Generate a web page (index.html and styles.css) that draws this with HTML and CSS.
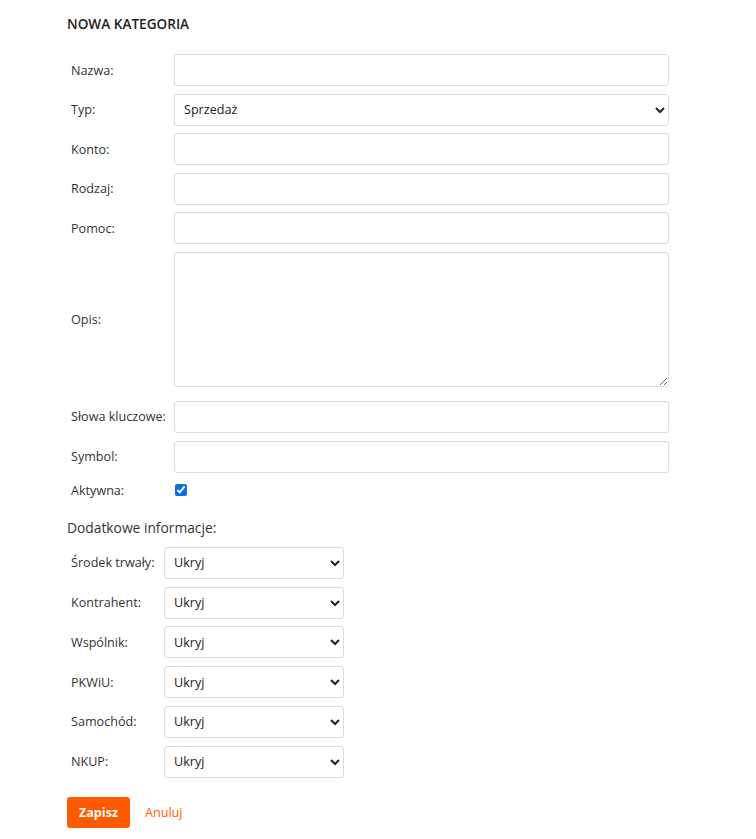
FILE: index.html
```html
<!DOCTYPE html>
<html lang="pl">
<head>
<meta charset="utf-8">
<title>Nowa kategoria</title>
<link rel="stylesheet" href="styles.css">
</head>
<body>
<div class="page">
  <h1 class="title">NOWA KATEGORIA</h1>
  <form class="form">
    <div class="row"><label class="lbl">Nazwa:</label><input class="field" type="text"></div>
    <div class="row"><label class="lbl">Typ:</label><select class="field"><option>Sprzedaż</option></select></div>
    <div class="row"><label class="lbl">Konto:</label><input class="field" type="text"></div>
    <div class="row"><label class="lbl">Rodzaj:</label><input class="field" type="text"></div>
    <div class="row"><label class="lbl">Pomoc:</label><input class="field" type="text"></div>
    <div class="row row-area"><label class="lbl">Opis:</label><textarea class="field area"></textarea></div>
    <div class="row"><label class="lbl">Słowa kluczowe:</label><input class="field" type="text"></div>
    <div class="row"><label class="lbl">Symbol:</label><input class="field" type="text"></div>
    <div class="row row-check"><label class="lbl">Aktywna:</label><input class="check" type="checkbox" checked></div>

    <div class="sub">Dodatkowe informacje:</div>
    <div class="row2"><label class="lbl2">Środek trwały:</label><select class="sel"><option>Ukryj</option></select></div>
    <div class="row2"><label class="lbl2">Kontrahent:</label><select class="sel"><option>Ukryj</option></select></div>
    <div class="row2"><label class="lbl2">Wspólnik:</label><select class="sel"><option>Ukryj</option></select></div>
    <div class="row2"><label class="lbl2">PKWiU:</label><select class="sel"><option>Ukryj</option></select></div>
    <div class="row2"><label class="lbl2">Samochód:</label><select class="sel"><option>Ukryj</option></select></div>
    <div class="row2"><label class="lbl2">NKUP:</label><select class="sel"><option>Ukryj</option></select></div>

    <div class="actions">
      <button type="button" class="btn">Zapisz</button>
      <a class="cancel" href="#">Anuluj</a>
    </div>
  </form>
</div>
</body>
</html>
```
FILE: styles.css
```css
html, body {
  margin: 0;
  padding: 0;
  background: #fff;
}
body {
  font-family: "Open Sans", "Liberation Sans", sans-serif;
  font-size: 12.6px;
  color: #333;
}
.page {
  width: 602px;
  padding: 14px 0 0 67px;
}
.title {
  margin: 0 0 21px 0;
  font-size: 13.6px;
  font-weight: 600;
  line-height: 19px;
  color: #222;
}
.form {
  display: flex;
  flex-direction: column;
}
.row {
  display: flex;
  align-items: center;
  margin-bottom: 7.6px;
}
.lbl {
  width: 103px;
  padding-left: 4px;
  flex: none;
  color: #333;
}
.field {
  box-sizing: border-box;
  width: 495px;
  height: 32px;
  border: 1px solid #dcdcdc;
  border-radius: 3px;
  font-family: "Open Sans", "Liberation Sans", sans-serif;
  font-size: 12.6px;
  color: #222;
  padding: 0 9px;
  background: #fff;
  margin: 0;
}
select.field {
  padding: 0 5px;
}
.area {
  height: 135px;
  resize: vertical;
  padding: 6px 9px;
}
.row-area {
  margin-bottom: 14px;
}
.row-check {
  height: 20px;
}
.check {
  margin: 0 0 0 1px;
  width: 12px;
  height: 12px;
  accent-color: #0b6ee8;
}
.sub {
  margin-top: 10px;
  margin-bottom: 10px;
  font-size: 13.8px;
  line-height: 19px;
  color: #333;
}
.row2 {
  display: flex;
  align-items: center;
  margin-bottom: 7.8px;
}
.lbl2 {
  width: 93px;
  padding-left: 4px;
  flex: none;
}
.sel {
  box-sizing: border-box;
  width: 180px;
  height: 32px;
  border: 1px solid #dcdcdc;
  border-radius: 3px;
  font-family: "Open Sans", "Liberation Sans", sans-serif;
  font-size: 12.6px;
  color: #222;
  padding: 0 5px;
  background: #fff;
  margin: 0;
}
.actions {
  display: flex;
  align-items: center;
  margin-top: 11px;
  gap: 15px;
}
.btn {
  width: 63px;
  height: 31px;
  border: 0;
  border-radius: 3px;
  background: #ff5a00;
  color: #fff;
  font-family: "Open Sans", "Liberation Sans", sans-serif;
  font-size: 12.6px;
  font-weight: 700;
  padding: 0;
}
.cancel {
  color: #ff5a00;
  text-decoration: none;
  font-size: 12.6px;
}
```
